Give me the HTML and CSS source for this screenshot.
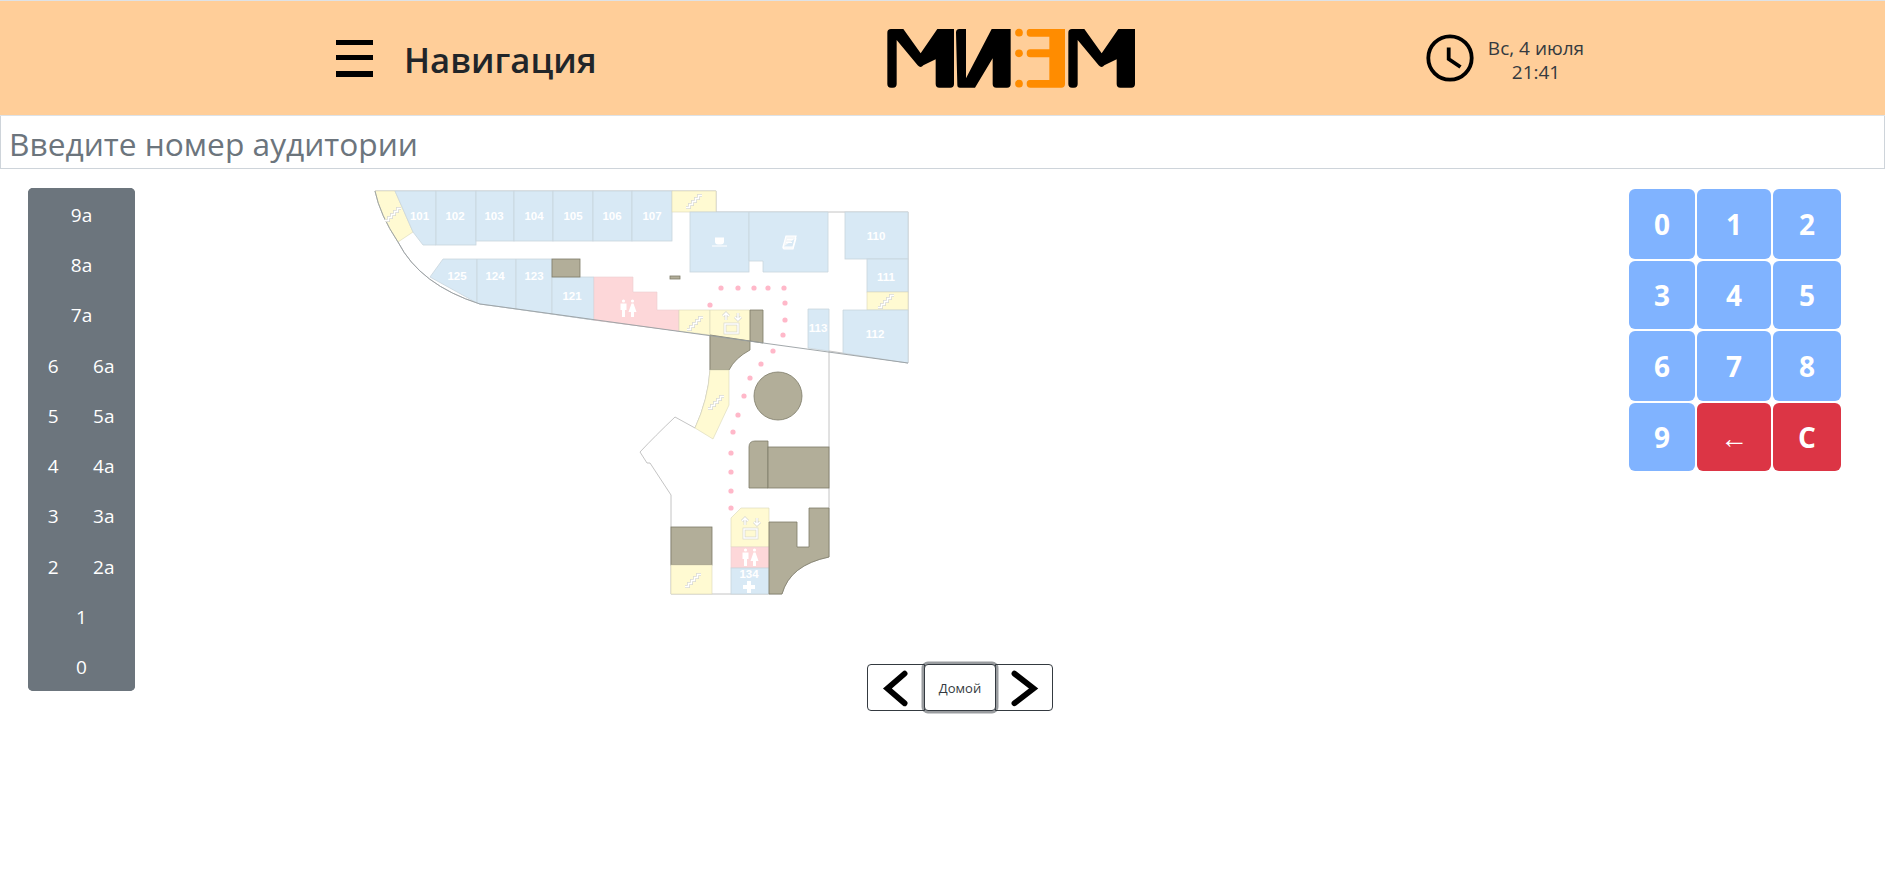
FILE: index.html
```html
<!DOCTYPE html>
<html lang="ru">
<head>
<meta charset="utf-8">
<title>Навигация</title>
<link rel="stylesheet" href="styles.css">
</head>
<body>
<header class="topbar">
  <svg class="burger" viewBox="0 0 37 37" aria-hidden="true"><rect width="37" height="5"/><rect y="15" width="37" height="5"/><rect y="31" width="37" height="6"/></svg>
  <h1 class="title">Навигация</h1>
  <svg class="logo" viewBox="0 0 795 240" role="img" aria-label="МИЭМ">
    <defs>
      <path id="em" d="M22 38Q22 27 33 27H70L122 100L172 27H222V192Q222 203 211 203H178Q167 203 167 192V118L130 136Q122 146 113 136L50 60V192Q50 203 39 203H33Q22 203 22 192Z"/>
    </defs>
    <use href="#em"/>
    <path d="M228 38Q228 27 238 27H258V175L335 27H392V192Q392 203 381 203H349Q338 203 338 192V115L285 203H240Q232 203 232 195Z"/>
    <use href="#em" x="543"/>
    <g class="logo-orange">
      <circle cx="417" cy="38" r="11.500"/><circle cx="417" cy="100" r="11.500"/><circle cx="417" cy="191" r="11.500"/>
      <path d="M450 27H555V192Q555 203 544 203H451Q440 203 440 191T451 180H508V112H451Q440 112 440 100T451 88H508V50H451Q440 50 440 38T450 27Z"/>
    </g>
  </svg>
  <svg class="clock" viewBox="0 0 48 48" aria-hidden="true"><circle cx="24" cy="24" r="21.700"/><path d="M22.700 13.500V25L34.500 33"/></svg>
  <div class="datetime"><div>Вс, 4 июля</div><div>21:41</div></div>
</header>

<input class="search" type="text" placeholder="Введите номер аудитории">

<main class="content">
  <nav class="floors">
    <button class="floor">9а</button>
    <button class="floor">8а</button>
    <button class="floor">7а</button>
    <button class="floor two"><span>6</span><span>6а</span></button>
    <button class="floor two"><span>5</span><span>5а</span></button>
    <button class="floor two"><span>4</span><span>4а</span></button>
    <button class="floor two"><span>3</span><span>3а</span></button>
    <button class="floor two"><span>2</span><span>2а</span></button>
    <button class="floor">1</button>
    <button class="floor">0</button>
  </nav>

  <section class="center">
    <svg class="map" viewBox="370 186 545 415" width="545" height="415">
      <defs>
        <path id="stair" d="M-8 6.500H-4.500V3.500H-1.500V.5H1.500V-2.500H4.500V-5.500H8"/>
        <g id="lift">
          <path d="M-6 -6V-13M-9 -10L-6 -13L-3 -10M6 -13V-6M3 -9L6 -6L9 -9"/>
          <rect x="-7" y="-2" width="13" height="9"/>
        </g>
        <g id="wc">
          <circle cx="-4.500" cy="-8" r="1.600"/><path d="M-7.500 -5.500H-1.500V1H-3V8H-6V1H-7.500Z"/>
          <circle cx="4.500" cy="-8" r="1.600"/><path d="M3.500 -5.500H5.500L8.500 3H6V8H3V3H.5Z"/>
        </g>
        <g id="stair-set">
          <use href="#stair" x="393" y="214"/>
          <use href="#stair" x="694" y="201"/><use href="#stair" x="886" y="301"/><use href="#stair" x="695" y="323"/><use href="#stair" x="716" y="402"/><use href="#stair" x="693" y="580"/>
          <use href="#lift" x="732" y="326"/><use href="#lift" x="751" y="531"/>
        </g>
      </defs>

      <path class="floorplan" d="M375 191H716V212H908V363L829 351V557Q790 565 782 594H671V495L650 463L647 463L640 452Q655 436 675 417L695 428Q708 400 710 370V335L594 320L495 306L480 304Q420 285 398 242Q380 215 375 191Z"/>

      <path class="stairs" d="M375 191H395L413 232L398 242Q380 215 375 191Z"/>
      <path class="room" d="M395 191H436V245H423L413 232Z"/>
      <rect class="room" x="436" y="191" width="40" height="54"/>
      <rect class="room" x="476" y="191" width="38" height="50"/>
      <rect class="room" x="514" y="191" width="39" height="50"/>
      <rect class="room" x="553" y="191" width="40" height="50"/>
      <rect class="room" x="593" y="191" width="39" height="50"/>
      <rect class="room" x="632" y="191" width="40" height="50"/>
      <rect class="stairs" x="672" y="191" width="44" height="21"/>
      <path class="room" d="M443 259H477V303L430 277Z"/>
      <path class="room" d="M477 259H516V309L495 306L480 304L477 303Z"/>
      <path class="room" d="M516 259H552V314L516 309Z"/>
      <path class="room" d="M552 277H594V320L552 314Z"/>
      <rect class="block" x="552" y="259" width="28" height="18"/>
      <path class="wc-room" d="M594 277H633V292H657V310H679V331L594 320Z"/>
      <path class="stairs" d="M679 310H710V335L679 331Z"/>
      <path class="stairs" d="M710 310H750V341L710 335Z"/>
      <path class="block" d="M750 310H763V343L750 341Z"/>
      <path class="block" d="M710 335L750 341V350Q735 358 729 370H710Z"/>
      <rect class="room" x="690" y="212" width="59" height="60"/>
      <path class="room" d="M749 212H828V272H763V261H749Z"/>
      <rect class="room" x="845" y="212" width="63" height="47"/>
      <rect class="room" x="867" y="259" width="41" height="33"/>
      <rect class="stairs" x="867" y="292" width="41" height="18"/>
      <path class="room" d="M843 310H908V363L843 353Z"/>
      <path class="room" d="M808 309H829V351L808 348Z"/>
      <rect class="block" x="670" y="276" width="10" height="3"/>

      <path class="stairs" d="M710 370H729V405L713 439L695 428Q708 400 710 370Z"/>
      <circle class="block" cx="778" cy="396" r="24"/>
      <path class="block" d="M749 447Q749 441 755 441H768V488H749Z"/>
      <rect class="block" x="768" y="447" width="61" height="41"/>
      <rect class="block" x="671" y="527" width="41" height="38"/>
      <rect class="stairs" x="671" y="565" width="41" height="29"/>
      <path class="stairs" d="M731 518L741 508H769V547H731Z"/>
      <rect class="wc-room" x="731" y="547" width="38" height="21"/>
      <rect class="room" x="731" y="568" width="38" height="26"/>
      <path class="block" d="M769 522H797V547H809V508H829V557Q790 565 782 594H769Z"/>

      <path class="edge" d="M375 191Q380 215 398 242Q420 285 480 304L495 306L908 363"/>

      <g class="dots">
        <circle cx="721" cy="288" r="2.600"/><circle cx="738" cy="288" r="2.600"/><circle cx="754" cy="288" r="2.600"/><circle cx="768" cy="288" r="2.600"/><circle cx="784" cy="288" r="2.600"/>
        <circle cx="785" cy="303" r="2.600"/><circle cx="785" cy="320" r="2.600"/><circle cx="783" cy="335" r="2.600"/><circle cx="773" cy="351" r="2.600"/><circle cx="761" cy="364" r="2.600"/>
        <circle cx="750" cy="378" r="2.600"/><circle cx="744" cy="396" r="2.600"/><circle cx="738" cy="415" r="2.600"/><circle cx="733" cy="432" r="2.600"/><circle cx="731" cy="453" r="2.600"/>
        <circle cx="731" cy="472" r="2.600"/><circle cx="731" cy="491" r="2.600"/><circle cx="731" cy="508" r="2.600"/><circle cx="710" cy="305" r="2.600"/>
      </g>

      <g class="labels">
        <text x="419.500" y="220">101</text><text x="455" y="220">102</text><text x="494" y="220">103</text><text x="534" y="220">104</text><text x="573" y="220">105</text><text x="612" y="220">106</text><text x="652" y="220">107</text>
        <text x="457" y="280">125</text><text x="495" y="280">124</text><text x="534" y="280">123</text><text x="572" y="300">121</text>
        <text x="876" y="240">110</text><text x="886" y="281">111</text><text x="818" y="332">113</text><text x="875" y="338">112</text><text x="749" y="578">134</text>
      </g>

      <use class="icon-under" href="#stair-set"/>
      <use class="icon-line" href="#stair-set"/>
      <g class="icon-fill">
        <use href="#wc" x="628" y="309"/><use href="#wc" x="750" y="558"/>
        <path d="M747 581H751V585H755V589H751V593H747V589H743V585H747Z"/>
        <path d="M715 237.500H724V241.500Q724 244.500 721 244.500H718Q715 244.500 715 241.500ZM712 245.500H727V246.500H712Z"/>
      </g>
      <g class="icon-book">
        <path d="M786 236H796L793 247H783ZM787 239.500H793M786 242.500H792M783 247Q783 249 785 249H793L796 238"/>
      </g>
    </svg>

    <div class="pager">
      <button class="pager-btn first" aria-label="Назад"><svg viewBox="0 0 58 47"><path d="M38 9L20 24.500L38 40"/></svg></button>
      <button class="pager-btn home">Домой</button>
      <button class="pager-btn last" aria-label="Вперёд"><svg viewBox="0 0 58 47"><path d="M19 9L39 24.500L19 40"/></svg></button>
    </div>
  </section>

  <div class="keypad">
    <button class="key">0</button><button class="key">1</button><button class="key">2</button>
    <button class="key">3</button><button class="key">4</button><button class="key">5</button>
    <button class="key">6</button><button class="key">7</button><button class="key">8</button>
    <button class="key">9</button><button class="key danger thin">←</button><button class="key danger">C</button>
  </div>
</main>
</body>
</html>
```
FILE: styles.css
```css
* { box-sizing: border-box; }
html, body { margin: 0; padding: 0; }
body {
  background: #fff;
  color: #212529;
  font-family: "Open Sans", "Noto Sans", sans-serif;
  height: 871px;
  overflow: hidden;
}
button { font-family: inherit; cursor: pointer; }

.topbar {
  display: flex;
  align-items: center;
  height: 116px;
  padding-left: 336px;
  background: #ffce99;
  border-top: 1px solid #dee2e6;
  border-bottom: 1px solid #dee2e6;
}
.burger { width: 37px; height: 37px; flex: none; fill: #000; }
.title {
  width: 514px;
  flex: none;
  margin: 4px 0 0;
  padding-left: 31px;
  font-size: 34.700px;
  font-weight: 600;
  line-height: 48px;
  color: #212529;
}
.logo { width: 265px; height: 80px; flex: none; margin: 4px 0 0 -7px; fill: #000; }
.logo-orange { fill: #ff8c00; }
.clock { width: 48px; height: 48px; flex: none; margin-left: 281px; fill: none; stroke: #000; stroke-width: 3.800; }
.datetime {
  width: 110px;
  margin: 3px 0 0 7px;
  font-size: 19px;
  line-height: 24px;
  text-align: center;
  color: #343a40;
}

.search {
  display: block;
  width: 100%;
  height: 53px;
  padding: 3px 8px 0;
  border: 1px solid #ced4da;
  border-top: 0;
  outline: 0;
  font-family: inherit;
  font-size: 31.700px;
  color: #495057;
}
.search::placeholder { color: #6c757d; opacity: 1; }

.content {
  display: flex;
  align-items: flex-start;
  padding: 17px 44px 0 28px;
}
.floors {
  display: flex;
  flex-direction: column;
  width: 107px;
  height: 503px;
  margin-top: 2px;
  flex: none;
  background: #6c757d;
  border-radius: 5px;
  overflow: hidden;
}
.floor {
  flex: 1;
  display: flex;
  align-items: center;
  justify-content: center;
  padding: 3px 0 0;
  border: 0;
  background: #6c757d;
  color: #fff;
  font-size: 19px;
}
.floor.two { padding-right: 6px; }
.floor.two span { flex: 1; text-align: center; }

.center {
  flex: 1;
  display: flex;
  flex-direction: column;
  align-items: flex-start;
  padding-left: 235px;
}
.map { display: block; }
.floorplan { fill: #fff; stroke: #b5b5b5; stroke-width: .8; }
.room { fill: #d8e9f5; stroke: #c9d5dd; stroke-width: .8; }
.stairs { fill: #fffad2; stroke: #d9d6b8; stroke-width: .6; }
.wc-room { fill: #fdd7d9; stroke: #eccdd0; stroke-width: .6; }
.block { fill: #b2ae99; stroke: #7d7b68; stroke-width: .8; }
.edge { fill: none; stroke: #979ea2; stroke-width: .9; }
.dots { fill: #ffb8c9; }
.labels text {
  fill: #fff;
  font-family: "Liberation Sans", Arial, sans-serif;
  font-size: 11.500px;
  font-weight: 700;
  text-anchor: middle;
}
.icon-under { fill: none; stroke: #d8d8d0; stroke-width: 2.800; }
.icon-line { fill: none; stroke: #fff; stroke-width: 1.400; }
.icon-fill { fill: #fff; }
.icon-book { fill: #f4f7f9; stroke: #fff; stroke-width: 1.200; }

.pager { display: flex; margin: 63px 0 0 497px; }
.pager-btn {
  height: 47px;
  padding: 0;
  background: #fff;
  border: 1px solid #343a40;
  color: #343a40;
}
.pager-btn svg { display: block; width: 100%; height: 100%; fill: none; stroke: #000; stroke-width: 6; stroke-linecap: round; stroke-linejoin: miter; }
.first { width: 58px; border-radius: 4px 0 0 4px; }
.last { width: 58px; margin-left: -1px; border-radius: 0 4px 4px 0; }
.home {
  position: relative;
  z-index: 1;
  width: 72px;
  margin-left: -1px;
  font-size: 13px;
  border-radius: 4px;
  box-shadow: 0 0 0 2.500px rgba(52, 58, 64, .5);
}

.keypad {
  display: grid;
  grid-template-columns: 66px 74px 68px;
  grid-template-rows: 70px 68px 70px 68px;
  gap: 2px;
  flex: none;
  margin-top: 3px;
}
.key {
  display: flex;
  align-items: center;
  justify-content: center;
  padding: 0;
  border: 0;
  border-radius: 6px;
  background: #80b3ff;
  color: #fff;
  font-size: 28px;
  font-weight: 700;
}
.danger { background: #dc3545; }
.thin { font-weight: 400; }
```
